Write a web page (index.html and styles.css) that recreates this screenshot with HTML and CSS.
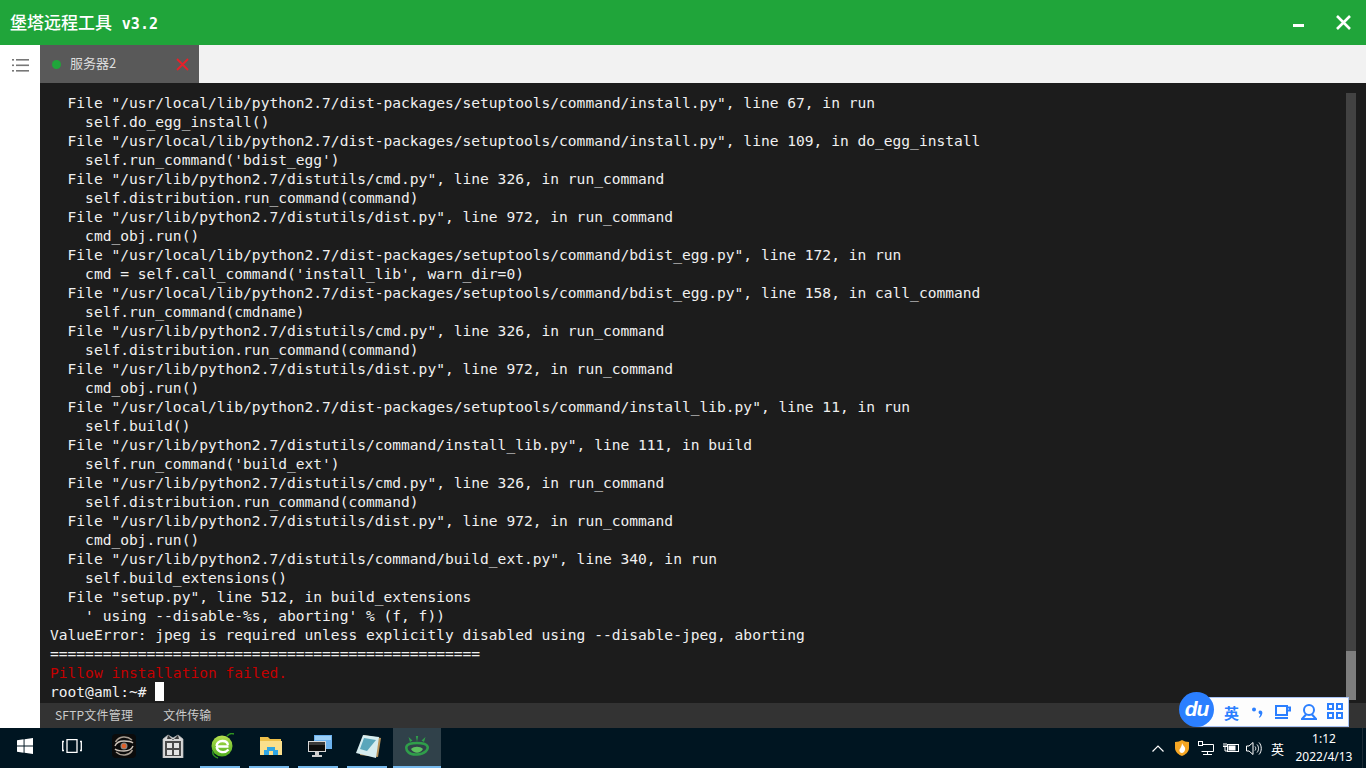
FILE: index.html
```html
<!DOCTYPE html>
<html lang="zh">
<head>
<meta charset="utf-8">
<title>堡塔远程工具</title>
<link rel="stylesheet" href="styles.css">
</head>
<body>
<div class="app">
  <header class="titlebar">
    <div class="title">堡塔远程工具 <span class="ver">v3.2</span></div>
    <div class="winbtns">
      <svg class="ico-min" width="11" height="3" viewBox="0 0 11 3"><rect width="11" height="3" fill="#fff"/></svg>
      <svg class="ico-close" width="15" height="15" viewBox="0 0 15 15"><path d="M1 1 14 14M14 1 1 14" stroke="#fff" stroke-width="2.600" fill="none"/></svg>
    </div>
  </header>
  <div class="main">
    <aside class="side">
      <svg width="18" height="15" viewBox="0 0 18 15"><g fill="#777"><rect x="1" y="1" width="2" height="1.600"/><rect x="5" y="1" width="13" height="1.600"/><rect x="1" y="6.500" width="2" height="1.600"/><rect x="5" y="6.500" width="13" height="1.600"/><rect x="1" y="12" width="2" height="1.600"/><rect x="5" y="12" width="13" height="1.600"/></g></svg>
    </aside>
    <div class="content">
      <div class="tabs">
        <div class="tab">
          <span class="dot"></span>
          <span class="tabname">服务器2</span>
          <svg class="tabx" width="13" height="13" viewBox="0 0 13 13"><path d="M1 1 12 12M12 1 1 12" stroke="#e8202a" stroke-width="1.800" fill="none"/></svg>
        </div>
      </div>
      <div class="term">
        <div class="output">  File "/usr/local/lib/python2.7/dist-packages/setuptools/command/install.py", line 67, in run
    self.do_egg_install()
  File "/usr/local/lib/python2.7/dist-packages/setuptools/command/install.py", line 109, in do_egg_install
    self.run_command('bdist_egg')
  File "/usr/lib/python2.7/distutils/cmd.py", line 326, in run_command
    self.distribution.run_command(command)
  File "/usr/lib/python2.7/distutils/dist.py", line 972, in run_command
    cmd_obj.run()
  File "/usr/local/lib/python2.7/dist-packages/setuptools/command/bdist_egg.py", line 172, in run
    cmd = self.call_command('install_lib', warn_dir=0)
  File "/usr/local/lib/python2.7/dist-packages/setuptools/command/bdist_egg.py", line 158, in call_command
    self.run_command(cmdname)
  File "/usr/lib/python2.7/distutils/cmd.py", line 326, in run_command
    self.distribution.run_command(command)
  File "/usr/lib/python2.7/distutils/dist.py", line 972, in run_command
    cmd_obj.run()
  File "/usr/local/lib/python2.7/dist-packages/setuptools/command/install_lib.py", line 11, in run
    self.build()
  File "/usr/lib/python2.7/distutils/command/install_lib.py", line 111, in build
    self.run_command('build_ext')
  File "/usr/lib/python2.7/distutils/cmd.py", line 326, in run_command
    self.distribution.run_command(command)
  File "/usr/lib/python2.7/distutils/dist.py", line 972, in run_command
    cmd_obj.run()
  File "/usr/lib/python2.7/distutils/command/build_ext.py", line 340, in run
    self.build_extensions()
  File "setup.py", line 512, in build_extensions
    ' using --disable-%s, aborting' % (f, f))
ValueError: jpeg is required unless explicitly disabled using --disable-jpeg, aborting
=================================================
<span class="err">Pillow installation failed.</span>
root@aml:~# <span class="cursor"> </span></div>
        <div class="scrollbar"><div class="thumb"></div></div>
      </div>
      <div class="bottombar">
        <span class="bt-sftp">SFTP文件管理</span>
        <span>文件传输</span>
      </div>
      <div class="ime">
        <div class="du">du</div>
        <span class="ime-y">英</span>
        <svg class="ime-comma" width="11" height="11" viewBox="0 0 11 11"><g fill="#2b7fff"><circle cx="2" cy="2.500" r="2"/><path d="M8 3.500c2 0 2.700 1.500 2.300 3-.4 1.800-1.300 3.300-2.800 4.300l-.7-.8c1-.9 1.400-1.700 1.500-2.800-2.200 0-2.200-3.700-.3-3.700z"/></g></svg>
        <svg class="ime-cup" width="16" height="14" viewBox="0 0 16 14" fill="none" stroke="#2b7fff" stroke-width="2"><path d="M1 1H12V10H1ZM12 2.500H15V5.500H12M0 13H13"/></svg>
        <svg class="ime-user" width="16" height="16" viewBox="0 0 16 16" fill="none" stroke="#2b7fff" stroke-width="2"><circle cx="8" cy="6" r="5"/><path d="M5 10.500 1 15H15L11 10.500"/></svg>
        <svg class="ime-grid" width="16" height="16" viewBox="0 0 16 16" fill="none" stroke="#2b7fff" stroke-width="2"><path d="M1 1H6V6H1ZM10 1H15V6H10ZM1 10H6V15H1ZM10 10H15V15H10Z"/></svg>
      </div>
    </div>
  </div>
  <footer class="taskbar">
    <div class="tb-left">
      <div class="tb-item">
        <svg width="16" height="16" viewBox="0 0 17 17" fill="#fff"><path d="M0 2.400 7 1.400V8H0ZM8 1.300 17 0V8H8ZM0 9H7V15.600L0 14.600ZM8 9H17V17L8 15.700Z"/></svg>
      </div>
      <div class="tb-item tb-view">
        <svg width="20" height="14" viewBox="0 0 20 14" fill="none" stroke="#fff" stroke-width="1.300"><path d="M5 .7H15V13.300H5ZM2 2.500H.7V11.500H2M18 2.500H19.300V11.500H18"/></svg>
      </div>
      <div class="tb-item shift">
        <svg width="24" height="24" viewBox="0 0 24 24"><rect width="24" height="24" rx="4" fill="#0b0b0b"/><path d="M20 6C15 1.500 7 2 3.500 8M4 18C9 22.500 17 22 20.500 16" fill="none" stroke="#a89e93" stroke-width="1.500"/><path d="M3 12C5 7 9 7 12 7S19 7 21 9M3 15C5 17 9 17 12 17S19 17 21 12" fill="none" stroke="#cfc6bc" stroke-width="1.400"/><circle cx="12" cy="12" r="3.500" fill="#8a857f"/><circle cx="12" cy="12" r="2.300" fill="#e0602a"/></svg>
      </div>
      <div class="tb-item shift">
        <svg width="22" height="24" viewBox="0 0 22 24"><path d="M1 5 6 1 11 4 16 1 21 5V24H1Z" fill="#d8d8d8" stroke="#bbb" stroke-width=".7"/><path d="M6 1 11 6 16 1 17 5H5Z" fill="#3c3c3c"/><path d="M3 7H19V22H3Z" fill="#4b4b4b"/><path d="M5 9H10V14H5ZM12 9H17V14H12ZM5 16H10V21H5ZM12 16H17V21H12Z" fill="#e4e4e4"/></svg>
      </div>
      <div class="tb-item shift on">
        <svg width="24" height="26" viewBox="0 0 24 26"><defs><linearGradient id="ieg" x1="0" y1="0" x2="0" y2="1"><stop offset="0" stop-color="#b7e04f"/><stop offset="1" stop-color="#4fae1f"/></linearGradient></defs><circle cx="12" cy="13" r="10.500" fill="url(#ieg)"/><path d="M6 13.500H18.500M6.500 13C7.500 6.500 17 6.500 18 12M6.500 14C8 20 15 20.500 18.500 16.500" fill="none" stroke="#fff" stroke-width="2.400"/><path d="M3 18C2 22 5 24 8 25M17 3C19 1 22 0 24 1" fill="none" stroke="#2f9420" stroke-width="1.500"/></svg>
      </div>
      <div class="tb-item shift on">
        <svg width="22" height="18" viewBox="0 0 22 18"><path d="M0 0H8L10 2H21V5H0Z" fill="#eec04a"/><path d="M0 4H22V18H0Z" fill="#fbdf8c"/><path d="M7 10H15V13H18V18H4V13H7Z" fill="#2fa5e3"/><rect x="9" y="14" width="4" height="4" fill="#fbdf8c"/></svg>
      </div>
      <div class="tb-item shift on">
        <svg width="24" height="24" viewBox="0 0 24 24"><path d="M6 1H24V15H6Z" fill="#6cb2ee"/><path d="M7 2H23V6H7Z" fill="#9dd0f7"/><path d="M0 7H18V18H0Z" fill="#d8d8d8"/><path d="M1 8H17V17H1Z" fill="#0c0c0c"/><path d="M1 8H17V11H1Z" fill="#3a3a3a"/><path d="M7 18H11V21H14V23H4V21H7Z" fill="#cfcfcf"/></svg>
      </div>
      <div class="tb-item shift on">
        <svg width="25" height="23" viewBox="0 0 25 23"><path d="M8 0 25 3 22 22 4 20Z" fill="#b8935a"/><path d="M7 0 23 2 20 23 0 18Z" fill="#d6ecef"/><path d="M8 3 20 5 11 16 4 14Z" fill="#5aa6bb"/></svg>
      </div>
      <div class="tb-item on active">
        <svg width="24" height="20" viewBox="0 0 24 20"><path d="M1.500 10.500C2.500 7.500 7 7 12 7S21.500 7.500 22.500 10.500 20 18 12 18.500 .5 14.500 1.500 10.500Z" fill="none" stroke="#2f9e4a" stroke-width="2.600"/><path d="M6 13C9 10 15 10 18 13 15 18 9 18 6 13Z" fill="#5cc15e"/><path d="M5 6 3.500 1 7.500 4.500ZM12 6 10.800 0H13.200ZM19 6 20.500 1 16.500 4.500Z" fill="#2f9e4a"/></svg>
      </div>
    </div>
    <div class="tray">
      <svg width="12" height="7" viewBox="0 0 12 7" fill="none" stroke="#fff" stroke-width="1.200"><path d="M.5 6.500 6 1 11.500 6.500"/></svg>
      <svg class="t-shield" width="14" height="16" viewBox="0 0 14 16"><path d="M0 2C3 2 5 1 7 0 9 1 11 2 14 2V8C14 12 10 15 7 16 4 15 0 12 0 8Z" fill="#f5a623"/><path d="M7 3C8 6 11 7 10 10 9.500 12 8 13 7 13 5 13 4 11 4.500 9.500 5.500 8 7 6 7 3Z" fill="#fff"/></svg>
      <svg width="16" height="14" viewBox="0 0 16 14" fill="none" stroke="#fff"><path d="M3.500 3.500H15.500V10.500H3.500M9.500 10.500V13.500M5 13.500H14"/><rect x=".5" y=".5" width="4" height="4" fill="#001521"/></svg>
      <svg class="t-pow" width="16" height="12" viewBox="0 0 16 12" fill="none" stroke="#fff"><rect x="4.500" y="2.500" width="11" height="7"/><rect x="5.500" y="3.500" width="7" height="5" fill="#fff" stroke="none"/><path d="M1 1V4M3 1V4M0 4.500H4M2 5V9H4.500"/></svg>
      <svg width="16" height="13" viewBox="0 0 16 13" fill="none" stroke="#fff"><path d="M.5 4H3L7 .5V12.500L3 9H.5ZM9 4.500C10 5.500 10 7.500 9 8.500M11 2.500C13 4.500 13 8.500 11 10.500M13 .5C16 3.500 16 9.500 13 12.500"/></svg>
      <span class="tray-ime">英</span>
      <div class="clock"><div>1:12</div><div>2022/4/13</div></div>
      <div class="showdesk"></div>
    </div>
  </footer>
</div>
</body>
</html>
```

FILE: styles.css
```css
* { box-sizing: border-box; }
html, body { margin: 0; padding: 0; height: 100%; overflow: hidden; }
body { font-family: "Noto Sans CJK SC", "Liberation Sans", sans-serif; }
.app { width: 1366px; height: 768px; display: flex; flex-direction: column; background: #fff; }

.titlebar { height: 45px; flex: none; background: #20a53a; display: flex; align-items: center; justify-content: space-between; padding-left: 10px; color: #fff; }
.title { font-size: 17px; font-weight: 500; font-family: "Noto Sans CJK SC", sans-serif; line-height: 1; white-space: pre; }
.ver { font-family: "DejaVu Sans Mono", monospace; font-weight: 700; font-size: 15px; margin-left: 6px; }
.winbtns { display: flex; align-items: center; gap: 32px; padding-right: 15px; }
.ico-min { margin-top: 6px; }

.main { flex: 1; display: flex; min-height: 0; position: relative; }
.side { width: 40px; flex: none; background: #fff; display: flex; justify-content: center; padding-top: 13px; }
.content { flex: 1; min-width: 0; display: flex; flex-direction: column; position: relative; }

.tabs { height: 38px; flex: none; background: #f2f2f2; display: flex; }
.tab { width: 159px; background: #595959; display: flex; align-items: center; padding: 0 10px 0 12px; color: #ddd; font-size: 13px; }
.dot { width: 9px; height: 9px; border-radius: 50%; background: #20a53a; margin-right: 9px; }
.tabname { flex: 1; margin-bottom: 3px; }

.term { flex: 1; background: #1c1c1c; position: relative; min-height: 0; padding: 10px 0 0 10px; overflow: hidden; }
.output { font-family: "DejaVu Sans Mono", monospace; font-size: 14.59px; line-height: 19px; color: #f0f0f0; white-space: pre; }
.err { color: #c40000; }
.cursor { display: inline-block; width: 9px; height: 19px; background: #fff; vertical-align: top; }
.scrollbar { position: absolute; top: 10px; left: 1306px; width: 10px; height: 607px; background: #424242; }
.thumb { position: absolute; bottom: 0; left: 0; width: 10px; height: 49px; background: #7e7e7e; }

.bottombar { height: 25px; flex: none; background: #333; color: #ccc; font-size: 12px; display: flex; align-items: center; gap: 30px; padding: 0 0 2px 15px; }
.bt-sftp { letter-spacing: .2px; }

.ime { position: absolute; right: 17px; bottom: 1px; width: 152px; height: 30px; background: #fdfdfd; border: 1px solid #a8c3f5; display: flex; align-items: center; padding-left: 26px; }
.du { position: absolute; left: -19px; top: -6px; width: 35px; height: 35px; border-radius: 50%; background: #2b7fff; color: #fff; font: italic 700 21px/33px "Liberation Sans", sans-serif; text-align: center; letter-spacing: -1px; }
.ime-y { color: #2b7fff; font-size: 15px; font-weight: 700; line-height: 1; }
.ime-comma { margin-left: 13px; }
.ime-cup { margin-left: 12px; }
.ime-user { margin-left: 10px; }
.ime-grid { margin-left: 10px; margin-top: -2px; }

.taskbar { height: 40px; flex: none; background: #001521; display: flex; justify-content: space-between; color: #fff; }
.tb-left { display: flex; }
.tb-item { width: 49px; height: 40px; display: flex; align-items: center; justify-content: center; padding-bottom: 2px; border-bottom: 2px solid transparent; position: relative; }
.tb-item.tb-view { padding-right: 4px; }
.tb-item.shift { padding-left: 2px; }
.tb-item.on::after { content: ""; position: absolute; left: 4px; right: 5px; bottom: -2px; height: 2px; background: #76b9ed; }
.tb-item.active { background: #30414a; width: 48px; margin-left: 1px; }
.tb-item.active::after { left: 0; right: 0; }

.tray { display: flex; align-items: center; gap: 9px; padding-right: 3px; }
.t-shield { margin-left: 2px; }
.t-pow + svg { margin-left: -2px; }
.tray-ime { font-size: 13px; line-height: 1; }
.clock { font-size: 12px; line-height: 18px; text-align: center; width: 66px; margin: 0 -4px 0 -2px; font-family: "Noto Sans", sans-serif; }
.showdesk { width: 1px; height: 40px; background: #1c2c36; }
```
